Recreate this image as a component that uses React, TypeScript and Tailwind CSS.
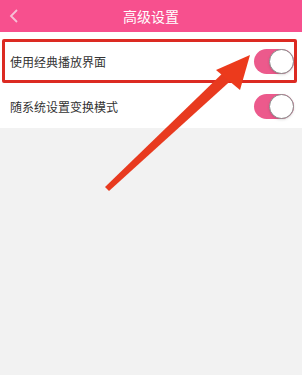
import React from "react";

function Toggle() {
  return (
    <div className="w-[40px] h-[25px] rounded-full bg-[#ec5a8c] relative">
      <div className="absolute right-0 top-0 w-[25px] h-[25px] rounded-full bg-white border-[1.5px] border-[#8a8a8a] shadow-sm" />
    </div>
  );
}

function Row({ label, h }: { label: string; h: string }) {
  return (
    <div className={`flex items-center justify-between pl-[10px] pr-[8px] ${h}`}>
      <span className="text-[12px] text-[#333]">{label}</span>
      <Toggle />
    </div>
  );
}

export default function App() {
  return (
    <div
      className="relative w-[302px] h-[375px] bg-[#f2f2f2] overflow-hidden"
      style={{ fontFamily: '"Noto Sans CJK SC", "Noto Sans", sans-serif' }}
    >
      <div className="h-[32px] bg-[#f7508e] flex items-center relative">
        <svg className="absolute left-[8px] top-[8px]" width="12" height="16" viewBox="0 0 12 16">
          <polyline points="9,2 3,8 9,14" fill="none" stroke="#f6c0d6" strokeWidth="1.8" />
        </svg>
        <div className="flex-1 text-center text-white text-[14px]">高级设置</div>
      </div>
      <div className="bg-white pt-[6px]">
        <Row label="使用经典播放界面" h="h-[47px]" />
        <Row label="随系统设置变换模式" h="h-[43px]" />
      </div>

      {/* annotation box */}
      <div className="absolute left-[2px] top-[39px] w-[295px] h-[44px] border-[3px] border-[#dc2a22] rounded-[2px]" />

      {/* annotation arrow */}
      <svg className="absolute left-0 top-0" width="302" height="375" viewBox="0 0 302 375">
        <polygon points="105,187 109,191 237,75 229,67" fill="#e83a1f" />
        <polygon points="250,55 216,70 240,90" fill="#ec3a1c" />
      </svg>
    </div>
  );
}
